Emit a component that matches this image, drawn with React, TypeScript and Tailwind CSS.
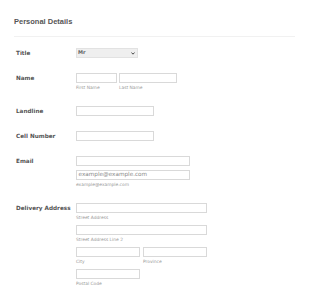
import React from "react";

const labelCls = "w-[60px] shrink-0 font-bold text-[5.7px] leading-[10px] text-[#555]";
const sub = "text-[4.4px] leading-[7px] text-[#999] mt-[1px]";
const inp = "h-[10px] border border-[#d9d9d9] bg-white";

function Row({ label, children }: { label: string; children: React.ReactNode }) {
  return (
    <div className="flex pl-[2px]">
      <div className={labelCls}>{label}</div>
      <div className="flex flex-col">{children}</div>
    </div>
  );
}

export default function App() {
  return (
    <div className="w-[310px] h-[300px] bg-white pl-[14px] pr-[15px] pt-[16px]" style={{ fontFamily: '"DejaVu Sans", sans-serif' }}>
      <div className="text-[7.5px] leading-[12px] font-bold text-[#555]" style={{ fontFamily: '"Liberation Sans", Arial, sans-serif' }}>
        Personal Details
      </div>
      <div className="mt-[8px] h-[1px] bg-[#f1f1f1]" />
      <div className="mt-[11px] flex flex-col gap-[15px]">
        <Row label="Title">
          <div className="w-[62px] h-[10px] border border-[#e2e2e2] bg-[#efefef] flex items-center justify-between px-[1px]">
            <span className="text-[5px] font-bold text-[#666]">Mr</span>
            <svg width="4" height="3" viewBox="0 0 4 3" className="mr-[1px]">
              <path d="M0.4 0.5 L2 2.2 L3.6 0.5" stroke="#333" strokeWidth="0.9" fill="none" />
            </svg>
          </div>
        </Row>
        <Row label="Name">
          <div className="flex gap-[2px]">
            <div className="flex flex-col">
              <div className={`${inp} w-[41px]`} />
              <div className={sub}>First Name</div>
            </div>
            <div className="flex flex-col">
              <div className={`${inp} w-[58px]`} />
              <div className={sub}>Last Name</div>
            </div>
          </div>
        </Row>
        <Row label="Landline">
          <div className={`${inp} w-[78px]`} />
        </Row>
        <Row label="Cell Number">
          <div className={`${inp} w-[78px]`} />
        </Row>
        <Row label="Email">
          <div className={`${inp} w-[114px]`} />
          <div className={`${inp} w-[114px] mt-[4px] flex items-center pl-[1.5px]`}>
            <span className="text-[5.7px] text-[#8a8a8a] leading-none">example@example.com</span>
          </div>
          <div className={sub}>example@example.com</div>
        </Row>
        <Row label="Delivery Address">
          <div className={`${inp} w-[131px]`} />
          <div className={sub}>Street Address</div>
          <div className={`${inp} w-[131px] mt-[4px]`} />
          <div className={sub}>Street Address Line 2</div>
          <div className="flex gap-[3px] mt-[4px]">
            <div className="flex flex-col">
              <div className={`${inp} w-[64px]`} />
              <div className={sub}>City</div>
            </div>
            <div className="flex flex-col">
              <div className={`${inp} w-[64px]`} />
              <div className={sub}>Province</div>
            </div>
          </div>
          <div className={`${inp} w-[64px] mt-[4px]`} />
          <div className={sub}>Postal Code</div>
        </Row>
      </div>
    </div>
  );
}
